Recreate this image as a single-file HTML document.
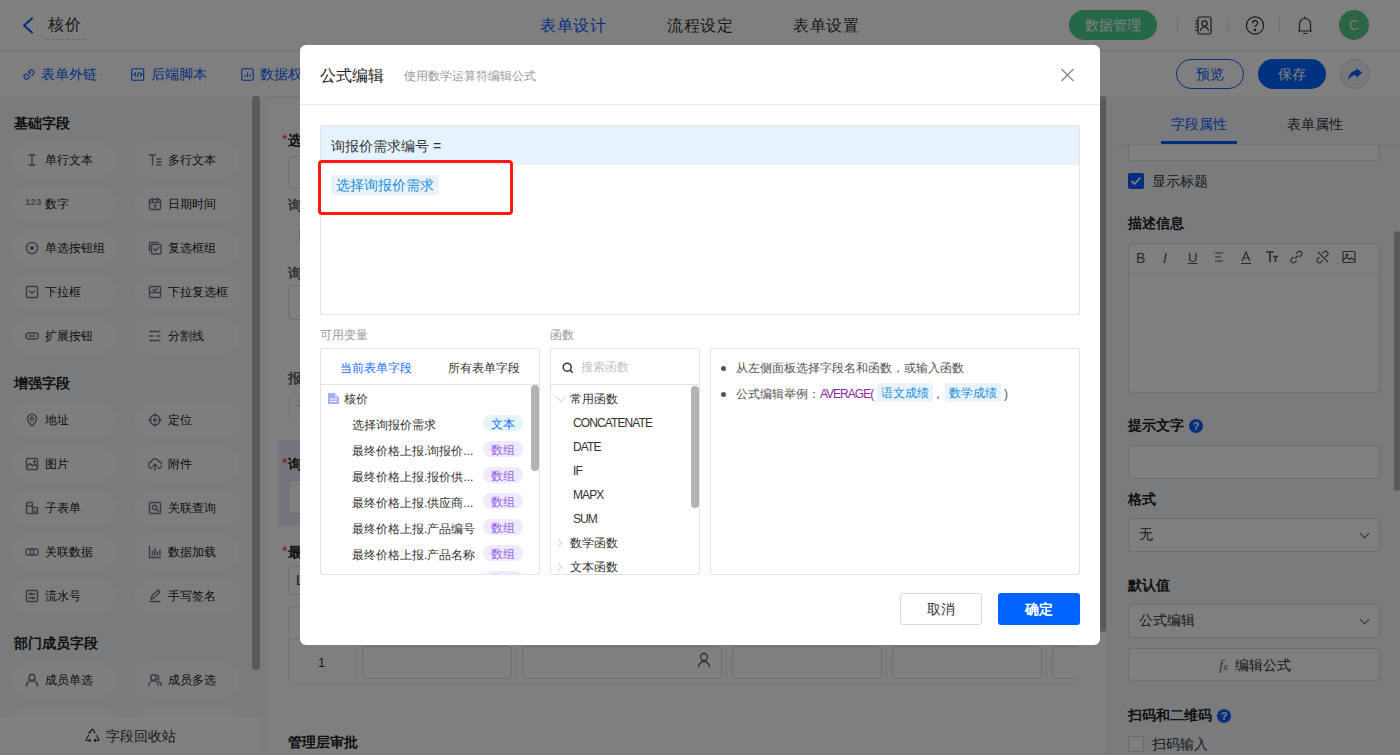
<!DOCTYPE html>
<html><head><meta charset="utf-8">
<style>
*{box-sizing:border-box;margin:0;padding:0}
html,body{width:1400px;height:755px;overflow:hidden}
body{position:relative;background:#fff;font-family:"Liberation Sans",sans-serif;color:#333;font-size:13px}
.a{position:absolute;white-space:nowrap}
/* header */
#hdr{left:0;top:0;width:1400px;height:51px;background:#fff;border-bottom:1px solid #e8e8e8}
#tb{left:0;top:50px;width:1400px;height:46px}
#side{left:0;top:96px;width:268px;height:659px;background:#f4f6fa}
#center{left:268px;top:96px;width:838px;height:659px;background:#fff}
#right{left:1106px;top:96px;width:294px;height:659px;background:#f4f6fa}
.sec{font-weight:bold;font-size:14px;color:#222}
.pill{width:105px;height:34px;border-radius:17px;background:#fcfcfd;font-size:12px;color:#1a1a1a;line-height:35px;padding-left:33px}
.pill .ic{left:13px;top:10px;line-height:0}
.flab{font-size:14px;font-weight:bold;color:#222;line-height:20px}
.req{color:#f5222d;font-weight:normal;font-size:14px;vertical-align:1px;margin-right:1px}
.flab2{font-size:14px;color:#666;line-height:20px;font-weight:bold}
.inp{border:1px solid #dcdcdc;border-radius:4px;background:#fff}
.rsec{font-size:14px;font-weight:bold;color:#222;line-height:20px}
.sel{font-size:14px;line-height:31px;padding-left:10px;color:#333}
.sel::after{content:"";position:absolute;right:11px;top:11px;width:6px;height:6px;border-right:1.5px solid #666;border-bottom:1.5px solid #666;transform:rotate(45deg)}
.box{border:1px solid #e3e3e3;background:#fff;border-radius:2px}
.tg1,.tg2{width:40px;height:16px;border-radius:8px;font-size:12px;line-height:18px;text-align:center;overflow:hidden}
.tg1{background:#e3f6f6;color:#1a6bff}
.tg2{background:#efeafd;color:#9463f0}
.tg3{height:19px;border-radius:3px;background:#e8f3fd;color:#1a8fd6;font-size:12px;line-height:21px;text-align:center}
#overlay{left:0;top:0;width:1400px;height:755px;background:rgba(0,0,0,.5)}
#modal{left:300px;top:45px;width:800px;height:600px;background:#fff;border-radius:6px}
</style></head><body>
<div id="hdr" class="a">
 <svg class="a" style="left:21px;top:17px" width="14" height="17" viewBox="0 0 14 17"><polyline points="11,1.5 3,8.5 11,15.5" fill="none" stroke="#0a5cff" stroke-width="2.2" stroke-linecap="round" stroke-linejoin="round"/></svg>
 <div class="a" style="left:48px;top:14px;font-size:16px;line-height:22px;color:#333;letter-spacing:0.5px">核价</div>
 <div class="a" style="left:46px;top:39px;width:40px;border-top:1px dashed #c8c8c8"></div>
 <div class="a" style="left:540px;top:15px;font-size:16px;line-height:22px;color:#0a5cff;letter-spacing:0.5px">表单设计</div>
 <div class="a" style="left:667px;top:15px;font-size:16px;line-height:22px;color:#333;letter-spacing:0.5px">流程设定</div>
 <div class="a" style="left:793px;top:15px;font-size:16px;line-height:22px;color:#333;letter-spacing:0.5px">表单设置</div>
 <div class="a" style="left:1069px;top:10px;width:88px;height:30px;border-radius:15px;background:#4ccf8f;color:#fff;font-size:14px;line-height:30px;text-align:center">数据管理</div>
 <div class="a" style="left:1177px;top:18px;width:1px;height:14px;background:#ddd"></div>
 <div class="a" style="left:1228px;top:18px;width:1px;height:14px;background:#ddd"></div>
 <div class="a" style="left:1279px;top:18px;width:1px;height:14px;background:#ddd"></div>
 <svg class="a" style="left:1193px;top:16px" width="19" height="19" viewBox="0 0 19 19" fill="none" stroke="#333" stroke-width="1.2"><rect x="5" y="1" width="13" height="17" rx="1.5"/><circle cx="11.5" cy="7.5" r="2.6"/><path d="M7.5 15c.5-2.8 2-4 4-4s3.5 1.2 4 4"/><path d="M2 5h3M2 8h3M2 11h3M2 14h3"/></svg>
 <svg class="a" style="left:1245px;top:16px" width="20" height="19" viewBox="0 0 20 19" fill="none" stroke="#333" stroke-width="1.2"><circle cx="10" cy="9.5" r="8.6"/><path d="M7.4 7.3c0-1.6 1.2-2.6 2.6-2.6s2.6 1 2.6 2.4c0 2-2.6 2.1-2.6 4"/><circle cx="10" cy="14" r=".6" fill="#333"/></svg>
 <svg class="a" style="left:1297px;top:15px" width="16" height="20" viewBox="0 0 16 20" fill="none" stroke="#333" stroke-width="1.2"><path d="M8 1.5v1.5M2.5 16V9a5.5 5.5 0 0 1 11 0v7M1 16h14M6 18.5h4"/></svg>
 <div class="a" style="left:1339px;top:10px;width:30px;height:30px;border-radius:50%;background:#5ac98a;color:#f4f0e8;font-size:14px;line-height:30px;text-align:center">C</div>
</div>
<div id="tb" class="a">
 <svg class="a" style="left:22px;top:18px" width="14" height="13" viewBox="0 0 14 13" fill="none" stroke="#0a5cff" stroke-width="1.1"><path d="M6 4.5l1.8-1.8a2.4 2.4 0 0 1 3.4 3.4L9.4 7.9M8 8.5L6.2 10.3a2.4 2.4 0 0 1-3.4-3.4L4.6 5.1M5 8.2l4-4"/></svg>
 <div class="a" style="left:41px;top:14px;font-size:14px;line-height:20px;color:#0a5cff">表单外链</div>
 <svg class="a" style="left:131px;top:18px" width="14" height="13" viewBox="0 0 14 13" fill="none" stroke="#0a5cff" stroke-width="1.1"><rect x=".7" y=".7" width="12" height="11.5" rx="1"/><path d="M5 4.5L3 6.5l2 2M9 4.5l2 2-2 2M7.8 4L6.2 9"/></svg>
 <div class="a" style="left:151px;top:14px;font-size:14px;line-height:20px;color:#0a5cff">后端脚本</div>
 <svg class="a" style="left:241px;top:18px" width="13" height="13" viewBox="0 0 13 13" fill="none" stroke="#0a5cff" stroke-width="1.1"><rect x=".7" y=".7" width="11.5" height="11.5" rx="1.5"/><path d="M4 9V7M6.5 9V4.5M9 9V6"/></svg>
 <div class="a" style="left:260px;top:14px;font-size:14px;line-height:20px;color:#0a5cff">数据权限</div>
 <div class="a" style="left:1176px;top:9px;width:68px;height:30px;border-radius:15px;border:1px solid #0a5cff;color:#0a5cff;font-size:14px;line-height:28px;text-align:center">预览</div>
 <div class="a" style="left:1258px;top:9px;width:68px;height:30px;border-radius:15px;background:#0066ff;color:#fff;font-size:14px;line-height:30px;text-align:center">保存</div>
 <div class="a" style="left:1340px;top:9px;width:30px;height:30px;border-radius:50%;background:#f0f3fa;border:1px solid #cfd7ea"></div>
 <svg class="a" style="left:1347px;top:17px" width="16" height="14" viewBox="0 0 16 14"><path d="M9.2 1L15.2 5.8 9.2 10.8V8C5.8 8 3.2 9.6 1.3 12.8 1.5 7.6 4.3 3.8 9.2 3.4z" fill="#0a5cff"/></svg>
</div>
<div id="side" class="a">
 <div class="a sec" style="left:14px;top:16px;line-height:22px">基础字段</div>
 <div class="a pill" style="left:12px;top:47px"><span class="a ic"><svg width="14" height="14" viewBox="0 0 14 14" fill="none" stroke="#6e7990" stroke-width="1.45" stroke-linecap="round" stroke-linejoin="round"><path d="M4 2h6M4 12h6M7 2v10"/></svg></span>单行文本</div>
 <div class="a pill" style="left:135px;top:47px"><span class="a ic"><svg width="14" height="14" viewBox="0 0 14 14" fill="none" stroke="#6e7990" stroke-width="1.45" stroke-linecap="round" stroke-linejoin="round"><path d="M1.5 2h6M4.5 2v10M9 6h4M9 9h4M9 12h4"/></svg></span>多行文本</div>
 <div class="a pill" style="left:12px;top:91px"><span class="a ic"><span style="display:block;font-family:'Liberation Sans';font-weight:bold;font-size:9.5px;line-height:12px;color:#7b859a;margin-top:-1px;letter-spacing:0.2px">123</span></span>数字</div>
 <div class="a pill" style="left:135px;top:91px"><span class="a ic"><svg width="14" height="14" viewBox="0 0 14 14" fill="none" stroke="#6e7990" stroke-width="1.45" stroke-linecap="round" stroke-linejoin="round"><rect x="1.5" y="2.5" width="11" height="10" rx="1.2"/><path d="M1.5 5.5h11M4.5 1v3M9.5 1v3M6 8h2l-1 3"/></svg></span>日期时间</div>
 <div class="a pill" style="left:12px;top:135px"><span class="a ic"><svg width="14" height="14" viewBox="0 0 14 14" fill="none" stroke="#6e7990" stroke-width="1.45" stroke-linecap="round" stroke-linejoin="round"><circle cx="7" cy="7" r="5.6"/><circle cx="7" cy="7" r="1.4" fill="#6e7990"/></svg></span>单选按钮组</div>
 <div class="a pill" style="left:135px;top:135px"><span class="a ic"><svg width="14" height="14" viewBox="0 0 14 14" fill="none" stroke="#6e7990" stroke-width="1.45" stroke-linecap="round" stroke-linejoin="round"><path d="M1.5 10V1.5H10"/><rect x="3.5" y="3.5" width="9.5" height="9.5" rx="1"/><path d="M5.8 8l1.8 1.8 3-3.3"/></svg></span>复选框组</div>
 <div class="a pill" style="left:12px;top:179px"><span class="a ic"><svg width="14" height="14" viewBox="0 0 14 14" fill="none" stroke="#6e7990" stroke-width="1.45" stroke-linecap="round" stroke-linejoin="round"><rect x="1.5" y="1.5" width="11" height="11" rx="1"/><path d="M4.5 6l2.5 2.5L9.5 6"/></svg></span>下拉框</div>
 <div class="a pill" style="left:135px;top:179px"><span class="a ic"><svg width="14" height="14" viewBox="0 0 14 14" fill="none" stroke="#6e7990" stroke-width="1.45" stroke-linecap="round" stroke-linejoin="round"><path d="M1.5 7.5V2.5a1 1 0 0 1 1-1h9a1 1 0 0 1 1 1v5zM1.5 7.5v4a1 1 0 0 0 1 1h9a1 1 0 0 0 1-1v-4M5 4.5l1.5 1.3L9 3.5"/></svg></span>下拉复选框</div>
 <div class="a pill" style="left:12px;top:223px"><span class="a ic"><svg width="14" height="14" viewBox="0 0 14 14" fill="none" stroke="#6e7990" stroke-width="1.45" stroke-linecap="round" stroke-linejoin="round"><rect x="1" y="4" width="12.5" height="6" rx="3"/><path d="M4.5 7h5"/></svg></span>扩展按钮</div>
 <div class="a pill" style="left:135px;top:223px"><span class="a ic"><svg width="14" height="14" viewBox="0 0 14 14" fill="none" stroke="#6e7990" stroke-width="1.45" stroke-linecap="round" stroke-linejoin="round"><path d="M2 2.5h10M2 7h3M9 7h3M2 11.5h10"/></svg></span>分割线</div>
 <div class="a sec" style="left:14px;top:276px;line-height:22px">增强字段</div>
 <div class="a pill" style="left:12px;top:307px"><span class="a ic"><svg width="14" height="14" viewBox="0 0 14 14" fill="none" stroke="#6e7990" stroke-width="1.45" stroke-linecap="round" stroke-linejoin="round"><path d="M7 13s-4.5-4.3-4.5-7.3a4.5 4.5 0 0 1 9 0C11.5 8.7 7 13 7 13z"/><circle cx="7" cy="5.8" r="1.6"/></svg></span>地址</div>
 <div class="a pill" style="left:135px;top:307px"><span class="a ic"><svg width="14" height="14" viewBox="0 0 14 14" fill="none" stroke="#6e7990" stroke-width="1.45" stroke-linecap="round" stroke-linejoin="round"><circle cx="7" cy="7" r="5"/><circle cx="7" cy="7" r="1.2"/><path d="M7 .8v2.5M7 10.7v2.5M.8 7h2.5M10.7 7h2.5"/></svg></span>定位</div>
 <div class="a pill" style="left:12px;top:351px"><span class="a ic"><svg width="14" height="14" viewBox="0 0 14 14" fill="none" stroke="#6e7990" stroke-width="1.45" stroke-linecap="round" stroke-linejoin="round"><rect x="1.5" y="1.5" width="11" height="11" rx="1.2"/><path d="M1.5 10l3.5-3.5 2.5 2.5 2-2 3 3"/><circle cx="9.5" cy="4.5" r=".8"/></svg></span>图片</div>
 <div class="a pill" style="left:135px;top:351px"><span class="a ic"><svg width="14" height="14" viewBox="0 0 14 14" fill="none" stroke="#6e7990" stroke-width="1.45" stroke-linecap="round" stroke-linejoin="round"><path d="M4 11H3.5a3 3 0 0 1-.3-6A4 4 0 0 1 11 5a2.8 2.8 0 0 1 .2 6H10M7 7v6M5 9l2-2 2 2"/></svg></span>附件</div>
 <div class="a pill" style="left:12px;top:395px"><span class="a ic"><svg width="14" height="14" viewBox="0 0 14 14" fill="none" stroke="#6e7990" stroke-width="1.45" stroke-linecap="round" stroke-linejoin="round"><rect x="1.5" y="1.5" width="6" height="11" rx="1"/><path d="M7.5 6.5h5v6h-5M1.5 5h6M10 9.5v3"/></svg></span>子表单</div>
 <div class="a pill" style="left:135px;top:395px"><span class="a ic"><svg width="14" height="14" viewBox="0 0 14 14" fill="none" stroke="#6e7990" stroke-width="1.45" stroke-linecap="round" stroke-linejoin="round"><rect x="1.5" y="1.5" width="11" height="11" rx="1"/><circle cx="6.5" cy="6.5" r="2.2"/><path d="M8.2 8.2L10.5 10.5"/></svg></span>关联查询</div>
 <div class="a pill" style="left:12px;top:439px"><span class="a ic"><svg width="14" height="14" viewBox="0 0 14 14" fill="none" stroke="#6e7990" stroke-width="1.45" stroke-linecap="round" stroke-linejoin="round"><rect x="1" y="4" width="7.5" height="6" rx="1.5"/><rect x="5.5" y="4" width="7.5" height="6" rx="1.5"/></svg></span>关联数据</div>
 <div class="a pill" style="left:135px;top:439px"><span class="a ic"><svg width="14" height="14" viewBox="0 0 14 14" fill="none" stroke="#6e7990" stroke-width="1.45" stroke-linecap="round" stroke-linejoin="round"><path d="M1.5 1.5v11h11M4.5 10V6M7 10V3.5M9.5 10V7M12 10V5"/></svg></span>数据加载</div>
 <div class="a pill" style="left:12px;top:483px"><span class="a ic"><svg width="14" height="14" viewBox="0 0 14 14" fill="none" stroke="#6e7990" stroke-width="1.45" stroke-linecap="round" stroke-linejoin="round"><rect x="1.5" y="1.5" width="11" height="11" rx="1"/><path d="M4 5h6M4 9h6M6 4v2M8 8v2"/></svg></span>流水号</div>
 <div class="a pill" style="left:135px;top:483px"><span class="a ic"><svg width="14" height="14" viewBox="0 0 14 14" fill="none" stroke="#6e7990" stroke-width="1.45" stroke-linecap="round" stroke-linejoin="round"><path d="M2 12.5h10M3 10l1-3 6-6 2 2-6 6z"/></svg></span>手写签名</div>
 <div class="a sec" style="left:14px;top:536px;line-height:22px">部门成员字段</div>
 <div class="a pill" style="left:12px;top:567px"><span class="a ic"><svg width="14" height="14" viewBox="0 0 14 14" fill="none" stroke="#6e7990" stroke-width="1.45" stroke-linecap="round" stroke-linejoin="round"><circle cx="7" cy="4.5" r="3"/><path d="M1.5 13a5.5 5.5 0 0 1 11 0"/></svg></span>成员单选</div>
 <div class="a pill" style="left:135px;top:567px"><span class="a ic"><svg width="14" height="14" viewBox="0 0 14 14" fill="none" stroke="#6e7990" stroke-width="1.45" stroke-linecap="round" stroke-linejoin="round"><circle cx="5.5" cy="4.5" r="2.8"/><path d="M.8 12.5a4.7 4.7 0 0 1 9.4 0M9 2a2.6 2.6 0 0 1 0 5M11 8.5a4.5 4.5 0 0 1 2.3 4"/></svg></span>成员多选</div>
 <div class="a pill" style="left:12px;top:611px"><span class="a ic"><svg width="14" height="14" viewBox="0 0 14 14" fill="none" stroke="#6e7990" stroke-width="1.45" stroke-linecap="round" stroke-linejoin="round"><rect x="1.5" y="2" width="11" height="10" rx="1"/></svg></span>部门单选</div>
 <div class="a pill" style="left:135px;top:611px"><span class="a ic"><svg width="14" height="14" viewBox="0 0 14 14" fill="none" stroke="#6e7990" stroke-width="1.45" stroke-linecap="round" stroke-linejoin="round"><rect x="1.5" y="2" width="11" height="10" rx="1"/></svg></span>部门多选</div>
 <div class="a" style="left:252px;top:0;width:8px;height:574px;border-radius:4px;background:#b4b4b4"></div>
 <div class="a" style="left:0;top:621px;width:260px;height:38px;background:#fff;font-size:14px;line-height:38px;text-align:center;color:#333;padding-left:0px"><svg style="vertical-align:-2px;margin-right:6px" width="15" height="15" viewBox="0 0 15 15" fill="none" stroke="#333" stroke-width="1.1" stroke-linejoin="round"><path d="M3.8 6.8L1.2 11.6a.6.6 0 0 0 .5.9H5.5M9.2 12.5h4.1a.6.6 0 0 0 .5-.9L11.3 7.2M10.3 5.4L7.9 1.4a.6.6 0 0 0-1 0L5 4.6M4.1 11l1.5 1.5-1.5 1.3M10.8 11l-1.6 1.5 1.6 1.3M3.3 4.4l1.8.3.4-1.8"/></svg>字段回收站</div>
</div>
<div id="center" class="a">
 <div class="a" style="left:0;top:0;width:838px;height:5px;background:linear-gradient(#f0f0f0,#fff)"></div>
 <div class="a flab" style="left:14px;top:33px"><span class="req">*</span>选择询报价需求</div>
 <div class="a inp" style="left:20px;top:60px;width:790px;height:33px"></div>
 <div class="a flab2" style="left:20px;top:99px">询报价需求编号</div>
 <div class="a" style="left:31px;top:134px;width:1px;height:11px;background:#ccc"></div>
 <div class="a flab2" style="left:20px;top:167px">询报价需求名称</div>
 <div class="a inp" style="left:20px;top:189px;width:790px;height:35px"></div>
 <div class="a flab2" style="left:20px;top:272px">报价截止时间</div>
 <div class="a inp" style="left:20px;top:296px;width:790px;height:29px;border-color:#f0f0f0"></div>
 <div class="a" style="left:28px;top:302px;font-size:12px;color:#b8bcc8;line-height:14px">手动选择</div>
 <div class="a" style="left:10px;top:344px;width:800px;height:86px;background:#e6ecf8"></div>
 <div class="a flab" style="left:14px;top:357px"><span class="req">*</span>询价产品</div>
 <div class="a inp" style="left:20px;top:384px;width:780px;height:34px"></div>
 <div class="a flab" style="left:14px;top:445px"><span class="req">*</span>最终价格上报</div>
 <div class="a inp" style="left:20px;top:470px;width:790px;height:29px;font-size:14px;line-height:27px;padding-left:7px;color:#3a2a5a">L</div>
 <div class="a" style="left:20px;top:510px;width:789px;height:78px;border:1px solid #e8e8e8;border-radius:4px"></div>
 <div class="a" style="left:20px;top:543px;width:789px;height:1px;background:#e8e8e8"></div>
 <div class="a" style="left:87px;top:510px;width:1px;height:78px;background:#e8e8e8"></div>
 <div class="a" style="left:50px;top:558px;font-size:13px;line-height:18px;color:#333">1</div>
 <div class="a inp" style="left:94px;top:550px;width:150px;height:33px"></div>
 <div class="a" style="left:248px;top:544px;width:1px;height:44px;background:#e8e8e8"></div>
 <div class="a inp" style="left:254px;top:550px;width:200px;height:33px"></div>
 <svg class="a" style="left:429px;top:556px" width="14" height="16" viewBox="0 0 14 16" fill="none" stroke="#555" stroke-width="1.3"><circle cx="7" cy="5" r="3.5"/><path d="M1.5 15a5.5 5.5 0 0 1 11 0"/></svg>
 <div class="a" style="left:458px;top:544px;width:1px;height:44px;background:#e8e8e8"></div>
 <div class="a inp" style="left:464px;top:550px;width:150px;height:33px"></div>
 <div class="a" style="left:618px;top:544px;width:1px;height:44px;background:#e8e8e8"></div>
 <div class="a inp" style="left:624px;top:550px;width:150px;height:33px"></div>
 <div class="a" style="left:778px;top:544px;width:1px;height:44px;background:#e8e8e8"></div>
 <div class="a inp" style="left:784px;top:550px;width:40px;height:33px"></div>
 <div class="a" style="left:809px;top:0;width:29px;height:659px;background:#fff"></div>
 <div class="a flab" style="left:20px;top:636px">管理层审批</div>
 <div class="a" style="left:832px;top:0;width:6px;height:536px;border-radius:3px;background:#b4b4b4"></div>
</div>
<div id="right" class="a">
 <div class="a" style="left:65px;top:17px;font-size:14px;line-height:22px;color:#0a5cff">字段属性</div>
 <div class="a" style="left:181px;top:17px;font-size:14px;line-height:22px;color:#333">表单属性</div>
 <div class="a" style="left:55px;top:45px;width:76px;height:3px;background:#0a5cff"></div>
 <div class="a" style="left:8px;top:48px;width:286px;height:1px;background:#e6e6e6"></div>
 <div class="a inp" style="left:22px;top:31px;width:252px;height:34px;border-top:none;border-radius:0 0 4px 4px;clip-path:inset(18px 0 0 0)"></div>
 <div class="a" style="left:22px;top:77px;width:16px;height:16px;border-radius:2px;background:#0a5cff"></div>
 <svg class="a" style="left:24px;top:80px" width="12" height="10" viewBox="0 0 12 10"><polyline points="1.5,5 4.5,8 10.5,1.5" fill="none" stroke="#fff" stroke-width="1.8"/></svg>
 <div class="a" style="left:46px;top:75px;font-size:14px;line-height:20px;color:#333">显示标题</div>
 <div class="a rsec" style="left:22px;top:117px">描述信息</div>
 <div class="a inp" style="left:22px;top:147px;width:252px;height:150px"></div>
 <div class="a" style="left:23px;top:177px;width:250px;height:1px;background:#e6e6e6"></div>
 <div class="a" style="left:30px;top:154px;height:16px;line-height:16px;font-size:14px;color:#555">
  <span class="a" style="left:0;font-family:'Liberation Sans';font-size:14px">B</span>
  <span class="a" style="left:27px;font-family:'Liberation Sans';font-style:italic;font-size:14px">I</span>
  <span class="a" style="left:52px;font-family:'Liberation Sans';font-size:13px;text-decoration:underline">U</span>
 </div>
 <svg class="a" style="left:1107px;top:0" width="0" height="0"></svg>
 <svg class="a" style="left:106px;top:153px" width="160" height="16" viewBox="0 0 160 16" fill="none" stroke="#555" stroke-width="1.2">
  <path d="M3 4h8M3 8h6M3 12h8"/>
  <path d="M30 12L34 3l4 9M31.5 9h5M29 14.5h10"/><!-- A -->
  <path d="M54 3h8M58 3v10M61 7.5h5M63.5 7.5v5.5" stroke-width="1.6"/>
  <path d="M83 9.5l3-3M81.5 8l-1.8 1.8a2.3 2.3 0 0 0 3.3 3.3l1.8-1.8M87.5 8l1.8-1.8a2.3 2.3 0 0 0-3.3-3.3L84.2 4.7"/>
  <path d="M107.5 8l-1.8 1.8a2.3 2.3 0 0 0 3.3 3.3l1.8-1.8M113.5 8l1.8-1.8a2.3 2.3 0 0 0-3.3-3.3l-1.8 1.8M106 3l10 10"/>
  <rect x="131" y="2.5" width="12" height="11" rx="1"/><path d="M131 11l3.5-3 3 2.5 2-1.5 3.5 2.5"/><circle cx="135" cy="6" r="1"/>
 </svg>
 <div class="a rsec" style="left:22px;top:319px">提示文字</div>
 <div class="a" style="left:83px;top:323px;width:14px;height:14px;border-radius:50%;background:#0a5cff;color:#fff;font-size:11px;line-height:14px;text-align:center;font-weight:bold">?</div>
 <div class="a inp" style="left:22px;top:349px;width:252px;height:34px"></div>
 <div class="a rsec" style="left:22px;top:393px">格式</div>
 <div class="a inp sel" style="left:22px;top:422px;width:252px;height:34px">无</div>
 <div class="a rsec" style="left:22px;top:479px">默认值</div>
 <div class="a inp sel" style="left:22px;top:508px;width:252px;height:34px">公式编辑</div>
 <div class="a inp" style="left:22px;top:552px;width:252px;height:33px;text-align:center;font-size:14px;line-height:32px;color:#333;padding-left:2px"><span style="font-family:'Liberation Serif';font-style:italic;color:#666;font-size:14px">f</span><span style="font-size:9px;color:#666;margin-right:7px">x</span>编辑公式</div>
 <div class="a rsec" style="left:22px;top:609px">扫码和二维码</div>
 <div class="a" style="left:111px;top:613px;width:14px;height:14px;border-radius:50%;background:#0a5cff;color:#fff;font-size:11px;line-height:14px;text-align:center;font-weight:bold">?</div>
 <div class="a" style="left:22px;top:640px;width:16px;height:16px;border:1px solid #ccc;border-radius:2px;background:#fff"></div>
 <div class="a" style="left:46px;top:638px;font-size:14px;line-height:20px;color:#333">扫码输入</div>
 <div class="a" style="left:288px;top:135px;width:6px;height:260px;border-radius:3px;background:#b4b4b4"></div>
</div>

<div id="overlay" class="a"></div>
<div id="modal" class="a">
 <div class="a" style="left:20px;top:20px;font-size:16px;line-height:22px;color:#222">公式编辑</div>
 <div class="a" style="left:104px;top:22px;font-size:12px;line-height:18px;color:#999">使用数学运算符编辑公式</div>
 <svg class="a" style="left:760px;top:23px" width="15" height="14" viewBox="0 0 15 14"><path d="M1.5 1l12 12M13.5 1l-12 12" stroke="#8a8a8a" stroke-width="1.4" fill="none"/></svg>
 <div class="a" style="left:0;top:59px;width:800px;height:1px;background:#e8e8e8"></div>
 <div class="a" style="left:20px;top:80px;width:760px;height:190px;border:1px solid #e3e3e3;border-radius:2px"></div>
 <div class="a" style="left:21px;top:81px;width:758px;height:39px;background:#e6f3fe"></div>
 <div class="a" style="left:31px;top:90px;font-size:14px;line-height:22px;color:#333">询报价需求编号 <span style="font-family:'Liberation Sans'">=</span></div>
 <div class="a" style="left:31px;top:130px;width:108px;height:20px;background:#e8f3fd;border-radius:2px;font-size:14px;line-height:20px;color:#1a8fd6;padding-left:5px">选择询报价需求</div>
 <div class="a" style="left:18px;top:115px;width:195px;height:55px;border:3px solid #ff1a10;border-radius:4px"></div>
 <div class="a" style="left:20px;top:281px;font-size:12px;line-height:18px;color:#999">可用变量</div>
 <div class="a" style="left:250px;top:281px;font-size:12px;line-height:18px;color:#999">函数</div>
 <div class="a box" style="left:20px;top:303px;width:220px;height:227px">
   <div class="a" style="left:19px;top:10px;font-size:12px;line-height:18px;color:#1a6bff">当前表单字段</div>
   <div class="a" style="left:127px;top:10px;font-size:12px;line-height:18px;color:#333">所有表单字段</div>
   <div class="a" style="left:0;top:35px;width:218px;height:1px;background:#e3e3e3"></div>
   <div class="a" style="left:0;top:36px;width:218px;height:190px;overflow:hidden">
   <svg class="a" style="left:7px;top:8px" width="11" height="11" viewBox="0 0 11 11"><path d="M0 0h7l4 4v7H0z" fill="#a6b0ff"/><path d="M7 0v4h4z" fill="#d6dbff"/><path d="M2 6h7M2 8.5h7" stroke="#fff" stroke-width="1"/></svg>
   <div class="a" style="left:23px;top:5px;font-size:12px;line-height:18px;color:#333">核价</div>
   <div class="a" style="left:31px;top:31px;font-size:12px;line-height:18px;color:#333">选择询报价需求</div>
   <div class="a tg1" style="left:162px;top:30px">文本</div>
   <div class="a" style="left:31px;top:57px;font-size:12px;line-height:18px;color:#333">最终价格上报.询报价...</div>
   <div class="a tg2" style="left:162px;top:56px">数组</div>
   <div class="a" style="left:31px;top:83px;font-size:12px;line-height:18px;color:#333">最终价格上报.报价供...</div>
   <div class="a tg2" style="left:162px;top:82px">数组</div>
   <div class="a" style="left:31px;top:109px;font-size:12px;line-height:18px;color:#333">最终价格上报.供应商...</div>
   <div class="a tg2" style="left:162px;top:108px">数组</div>
   <div class="a" style="left:31px;top:135px;font-size:12px;line-height:18px;color:#333">最终价格上报.产品编号</div>
   <div class="a tg2" style="left:162px;top:134px">数组</div>
   <div class="a" style="left:31px;top:161px;font-size:12px;line-height:18px;color:#333">最终价格上报.产品名称</div>
   <div class="a tg2" style="left:162px;top:160px">数组</div>
   <div class="a" style="left:31px;top:187px;font-size:12px;line-height:18px;color:#333">最终价格上报.规格</div>
   <div class="a tg2" style="left:162px;top:186px">数组</div>
   <div class="a" style="left:210px;top:0px;width:8px;height:86px;border-radius:4px;background:#b3b3b3"></div>
   </div>
 </div>
 <div class="a box" style="left:250px;top:303px;width:150px;height:227px">
   <svg class="a" style="left:11px;top:13px" width="12" height="12" viewBox="0 0 12 12" fill="none" stroke="#333" stroke-width="1.5"><circle cx="5.2" cy="5.2" r="4"/><path d="M8 8l2.8 2.8"/></svg>
   <div class="a" style="left:30px;top:9px;font-size:12px;line-height:18px;color:#c4c4c4">搜索函数</div>
   <div class="a" style="left:0;top:35px;width:148px;height:1px;background:#e3e3e3"></div>
   <div class="a" style="left:0;top:36px;width:148px;height:190px;overflow:hidden">
   <svg class="a" style="left:4px;top:10px" width="12" height="8" viewBox="0 0 12 8"><polyline points="1,1.5 6,6.5 11,1.5" fill="none" stroke="#c8c8c8" stroke-width="1"/></svg>
   <div class="a" style="left:19px;top:5px;font-size:12px;line-height:18px;color:#333">常用函数</div>
   <div class="a" style="left:23px;top:29px;font-size:12px;line-height:18px;color:#333;font-family:'Liberation Sans',sans-serif;letter-spacing:-0.9px;margin-left:-1px">CONCATENATE</div>
   <div class="a" style="left:23px;top:53px;font-size:12px;line-height:18px;color:#333;font-family:'Liberation Sans',sans-serif;letter-spacing:-0.9px;margin-left:-1px">DATE</div>
   <div class="a" style="left:23px;top:77px;font-size:12px;line-height:18px;color:#333;font-family:'Liberation Sans',sans-serif;letter-spacing:-0.9px;margin-left:-1px">IF</div>
   <div class="a" style="left:23px;top:101px;font-size:12px;line-height:18px;color:#333;font-family:'Liberation Sans',sans-serif;letter-spacing:-0.9px;margin-left:-1px">MAPX</div>
   <div class="a" style="left:23px;top:125px;font-size:12px;line-height:18px;color:#333;font-family:'Liberation Sans',sans-serif;letter-spacing:-0.9px;margin-left:-1px">SUM</div>
   <svg class="a" style="left:6px;top:153px" width="6" height="10" viewBox="0 0 6 10"><polyline points="1.5,1.5 4.5,5 1.5,8.5" fill="none" stroke="#c8c8c8" stroke-width="1"/></svg>
   <div class="a" style="left:19px;top:149px;font-size:12px;line-height:18px;color:#333">数学函数</div>
   <svg class="a" style="left:6px;top:177px" width="6" height="10" viewBox="0 0 6 10"><polyline points="1.5,1.5 4.5,5 1.5,8.5" fill="none" stroke="#c8c8c8" stroke-width="1"/></svg>
   <div class="a" style="left:19px;top:173px;font-size:12px;line-height:18px;color:#333">文本函数</div>
   <svg class="a" style="left:6px;top:201px" width="6" height="10" viewBox="0 0 6 10"><polyline points="1.5,1.5 4.5,5 1.5,8.5" fill="none" stroke="#c8c8c8" stroke-width="1"/></svg>
   <div class="a" style="left:19px;top:197px;font-size:12px;line-height:18px;color:#333">逻辑函数</div>
   <div class="a" style="left:140px;top:1px;width:8px;height:122px;border-radius:4px;background:#b3b3b3"></div>
   </div>
 </div>
 <div class="a box" style="left:410px;top:303px;width:370px;height:227px">
   <div class="a" style="left:10px;top:17px;width:5px;height:5px;border-radius:50%;background:#555"></div>
   <div class="a" style="left:25px;top:10px;font-size:12px;line-height:18px;color:#555">从左侧面板选择字段名和函数，或输入函数</div>
   <div class="a" style="left:10px;top:43px;width:5px;height:5px;border-radius:50%;background:#555"></div>
   <div class="a" style="left:25px;top:36px;font-size:12px;line-height:18px;color:#555">公式编辑举例：</div>
   <div class="a" style="left:109px;top:36px;font-size:12px;line-height:18px;color:#8b2a9b;font-family:'Liberation Sans',sans-serif;letter-spacing:-1px">AVERAGE(</div>
   <div class="a tg3" style="left:166px;top:34px;width:56px">语文成绩</div>
   <div class="a" style="left:221px;top:36px;font-size:12px;line-height:18px;color:#555">，</div>
   <div class="a tg3" style="left:234px;top:34px;width:56px">数学成绩</div>
   <div class="a" style="left:293px;top:36px;font-size:12px;line-height:18px;color:#555;font-family:'Liberation Sans'">)</div>
 </div>
 <div class="a" style="left:600px;top:548px;width:82px;height:32px;border:1px solid #d9d9d9;border-radius:3px;font-size:14px;line-height:30px;text-align:center;color:#333">取消</div>
 <div class="a" style="left:698px;top:548px;width:82px;height:32px;background:#0062ff;border-radius:3px;font-size:14px;line-height:32px;text-align:center;color:#fff;font-weight:bold">确定</div>
</div>
</body></html>
